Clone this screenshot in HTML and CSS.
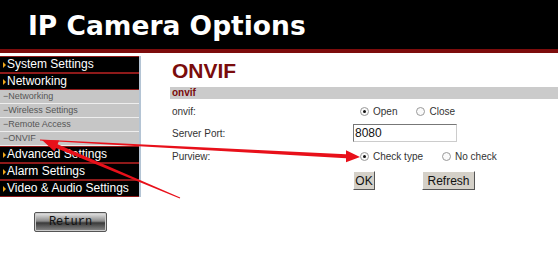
FILE: index.html
```
<!DOCTYPE html>
<html>
<head>
<meta charset="utf-8">
<link rel="stylesheet" href="styles.css">
</head>
<body>
<div class="header"><h1 class="title">IP Camera Options</h1></div>
<div class="layout">
  <div class="side">
    <ul class="menu">
      <li class="main"><span class="tri"></span>System Settings</li>
      <li class="main"><span class="tri"></span>Networking</li>
      <li class="sub">−Networking</li>
      <li class="sub">−Wireless Settings</li>
      <li class="sub">−Remote Access</li>
      <li class="sub">−ONVIF</li>
      <li class="main"><span class="tri"></span>Advanced Settings</li>
      <li class="main"><span class="tri"></span>Alarm Settings</li>
      <li class="main"><span class="tri"></span>Video &amp; Audio Settings</li>
    </ul>
    <div class="return-wrap"><button class="return">Return</button></div>
  </div>
  <div class="content">
    <h2 class="page-title">ONVIF</h2>
    <div class="bar">onvif</div>
    <div class="form">
      <div class="label">onvif:</div>
      <div class="ctrl"><span class="radio on"></span><span class="opt">Open</span><span class="radio"></span><span class="opt">Close</span></div>
      <div class="label">Server Port:</div>
      <div class="ctrl"><span class="input">8080</span></div>
      <div class="label">Purview:</div>
      <div class="ctrl"><span class="radio on"></span><span class="opt">Check type</span><span class="radio"></span><span class="opt">No check</span></div>
      <div class="label"></div>
      <div class="ctrl btns"><button class="btn ok">OK</button><button class="btn refresh">Refresh</button></div>
    </div>
  </div>
</div>
<svg class="arrows" width="558" height="255" viewBox="0 0 558 255">
  <polygon points="40,139.5 346,154.3 346,150.3 360,157 346,162.3 346,158.3 40,140.5" fill="#e8101a"/>
  <polygon points="180.2,197.5 57.6,144.3 59.1,140.6 42,140 54.5,151.6 56,147.9 179.8,198.5" fill="#e8101a"/>
</svg>
</body>
</html>
```
FILE: styles.css
```
* { box-sizing: border-box; }
body {
  margin: 0;
  width: 558px;
  height: 255px;
  overflow: hidden;
  position: relative;
  background: #fff;
  font-family: "Liberation Sans", Arial, sans-serif;
}
.header {
  height: 53px;
  background: #000;
  border-bottom: 4px solid #7d0c0c;
  padding-left: 28px;
}
.title {
  margin: 0;
  padding-top: 11px;
  color: #fff;
  font-family: "DejaVu Sans", Verdana, sans-serif;
  font-weight: bold;
  font-size: 26.5px;
  line-height: 30px;
}
.layout {
  display: flex;
  padding-top: 3px;
}
.side {
  width: 141px;
  flex: none;
}
.menu {
  list-style: none;
  margin: 0;
  padding: 0;
  border-right: 2px solid #b4c4d4;
}
.main {
  height: 17px;
  background: #000;
  color: #fff;
  font-size: 12px;
  line-height: 15px;
  border-top: 1px solid #8e1a1a;
  border-bottom: 1px solid #8e1a1a;
  display: flex;
  align-items: center;
  padding-left: 3px;
}
.tri {
  width: 0;
  height: 0;
  border-top: 3px solid transparent;
  border-bottom: 3px solid transparent;
  border-left: 3px solid #f0a81c;
  margin-right: 1px;
}
.sub {
  height: 14px;
  background: #c6c6c6;
  border-bottom: 1px solid #eee;
  color: #555;
  font-size: 9px;
  line-height: 13px;
  padding-left: 3px;
}
.return-wrap {
  padding: 14px 0 0 34px;
}
.return {
  width: 73px;
  height: 20px;
  border: 1px solid #555;
  border-radius: 2px;
  background: linear-gradient(#e8e8e8, #8a8a8a 45%, #3a3a3a 55%, #8c8c8c);
  color: #111;
  font-family: "Liberation Mono", monospace;
  font-size: 12px;
  padding: 0;
  box-shadow: inset 0 0 0 1px #ccc;
}
.content {
  flex: 1;
  padding-left: 29px;
}
.page-title {
  margin: 3px 0 0 2px;
  color: #7a0c0c;
  font-size: 21px;
  line-height: 24px;
  font-weight: bold;
}
.bar {
  margin-top: 4px;
  height: 12px;
  background: #cbcbcb;
  color: #7a0c0c;
  font-size: 10px;
  font-weight: bold;
  line-height: 12px;
  padding-left: 2px;
}
.form {
  display: grid;
  grid-template-columns: 183px 1fr;
  grid-template-rows: 25px 18px 29px 19px;
  color: #333;
  font-size: 10px;
}
.label {
  display: flex;
  align-items: center;
  padding-left: 2px;
}
.ctrl {
  display: flex;
  align-items: center;
}
.radio {
  width: 9px;
  height: 9px;
  border-radius: 50%;
  border: 1px solid #999;
  background: #fafafa;
  margin: 0 4px 0 7px;
  position: relative;
}
.radio.on::after {
  content: "";
  position: absolute;
  left: 2px;
  top: 2px;
  width: 3px;
  height: 3px;
  border-radius: 50%;
  background: #111;
}
.opt { margin-right: 12px; }
.input {
  width: 104px;
  height: 18px;
  border: 1px solid #777;
  border-right-color: #ccc;
  border-bottom-color: #ccc;
  font-size: 12px;
  color: #111;
  line-height: 16px;
  padding-left: 1px;
}
.btns { align-items: flex-end; }
.btn {
  height: 19px;
  background: #d4d0c8;
  border: 1px solid;
  border-color: #fff #555 #555 #fff;
  font-family: "Liberation Sans", Arial, sans-serif;
  font-size: 12px;
  color: #111;
  padding: 0;
}
.ok { width: 22px; margin-left: 0; }
.refresh { width: 53px; margin-left: 47px; }
.arrows {
  position: absolute;
  left: 0;
  top: 0;
  pointer-events: none;
}
```
